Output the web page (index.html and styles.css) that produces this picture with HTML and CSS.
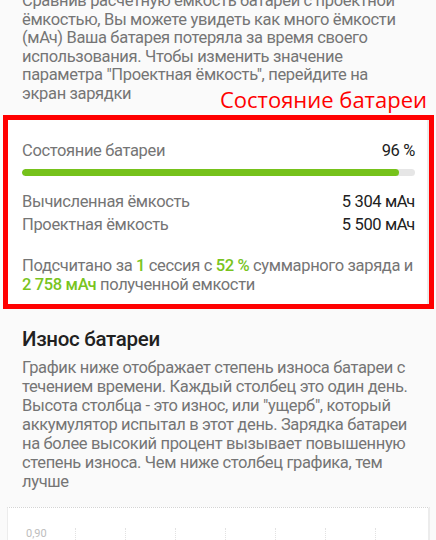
FILE: index.html
```html
<!DOCTYPE html>
<html lang="ru">
<head>
<meta charset="utf-8">
<title>Состояние батареи</title>
<link rel="stylesheet" href="styles.css">
</head>
<body>
<main class="page">
  <section class="intro">
    <p class="desc">Сравнив расчетную ёмкость батареи с проектной<br>ёмкостью, Вы можете увидеть как много ёмкости<br>(мАч) Ваша батарея потеряла за время своего<br>использования. Чтобы изменить значение<br>параметра "Проектная ёмкость", перейдите на<br>экран зарядки</p>
  </section>
  <span class="callout">Состояние батареи</span>

  <div class="frame">
    <div class="card">
      <div class="row">
        <span class="label">Состояние батареи</span>
        <span class="value">96 %</span>
      </div>
      <div class="bar"><div class="fill" style="width:96%"></div></div>
      <div class="row">
        <span class="label">Вычисленная ёмкость</span>
        <span class="value">5 304 мАч</span>
      </div>
      <div class="row">
        <span class="label">Проектная ёмкость</span>
        <span class="value">5 500 мАч</span>
      </div>
      <p class="note">Подсчитано за <b>1</b> сессия с <b>52 %</b> суммарного заряда и<br><b>2 758 мАч</b> полученной емкости</p>
    </div>
  </div>

  <section class="wear">
    <h2 class="title">Износ батареи</h2>
    <p class="desc wear-text">График ниже отображает степень износа батареи с<br>течением времени. Каждый столбец это один день.<br>Высота столбца - это износ, или "ущерб", который<br>аккумулятор испытал в этот день. Зарядка батареи<br>на более высокий процент вызывает повышенную<br>степень износа. Чем ниже столбец графика, тем<br>лучше</p>
  </section>

  <div class="chart">
    <span class="axis">0,90</span>
    <div class="grid">
      <i></i><i></i><i></i><i></i><i></i><i></i><i></i>
    </div>
  </div>
</main>
</body>
</html>
```

FILE: styles.css
```css
html, body {
  margin: 0;
  padding: 0;
}

body {
  background: #fafafa;
  font-family: Roboto, "Noto Sans", sans-serif;
  color: #212121;
  width: 436px;
  height: 540px;
  overflow: hidden;
}

.page {
  position: relative;
  display: flex;
  flex-direction: column;
}

.desc {
  margin: 0;
  font-size: 16.5px;
  letter-spacing: -0.35px;
  line-height: 18.5px;
  color: #757575;
  white-space: nowrap;
}

.intro {
  padding: 0 22px;
  margin-top: -8px;
}

/* red annotation placed over the section header */
.callout {
  position: absolute;
  right: 9px;
  top: 86px;
  font-family: "Open Sans", sans-serif;
  font-size: 22px;
  line-height: 26px;
  color: #ff0000;
}

.frame {
  margin: 12px 2px 0 3px;
  border: 5px solid #ff0000;
}

.card {
  background: #ffffff;
  box-shadow: inset -2px 0 0 #ececec;
  padding: 18.5px 14px 10.5px;
  display: flex;
  flex-direction: column;
}

.row {
  display: flex;
  justify-content: space-between;
  font-size: 16.5px;
  letter-spacing: -0.35px;
  line-height: 23px;
}

.label {
  color: #757575;
}

.value {
  color: #212121;
}

.bar {
  height: 7px;
  border-radius: 4px;
  background: #e6e6e6;
  margin: 7px 0 14px;
  overflow: hidden;
}

.fill {
  height: 100%;
  border-radius: 4px;
  background: #76c21b;
}

.note {
  margin: 20px 0 0;
  font-size: 16.5px;
  letter-spacing: -0.35px;
  line-height: 19px;
  color: #757575;
  white-space: nowrap;
}

.note b {
  color: #79c41e;
  font-weight: 500;
}

.wear {
  padding: 0 22px;
}

.title {
  margin: 18px 0 6.5px;
  font-size: 20.5px;
  letter-spacing: -0.3px;
  line-height: 24px;
  font-weight: 500;
  color: #212121;
}

.wear-text {
  line-height: 19px;
}

.chart {
  position: relative;
  margin: 16.5px 6px 0 7px;
  height: 60px;
  background: #ffffff;
  border-top: 1px dotted #d4d4d4;
  border-left: 1px solid #ececec;
  border-right: 2px solid #ececec;
}

.axis {
  position: absolute;
  left: 18px;
  top: 19px;
  font-size: 11px;
  line-height: 14px;
  color: #bdbdbd;
}

.grid {
  display: flex;
  gap: 49px;
  padding: 20px 0 0 67px;
}

.grid i {
  width: 0;
  height: 40px;
  border-left: 1px dotted #e2e2e2;
}
```
